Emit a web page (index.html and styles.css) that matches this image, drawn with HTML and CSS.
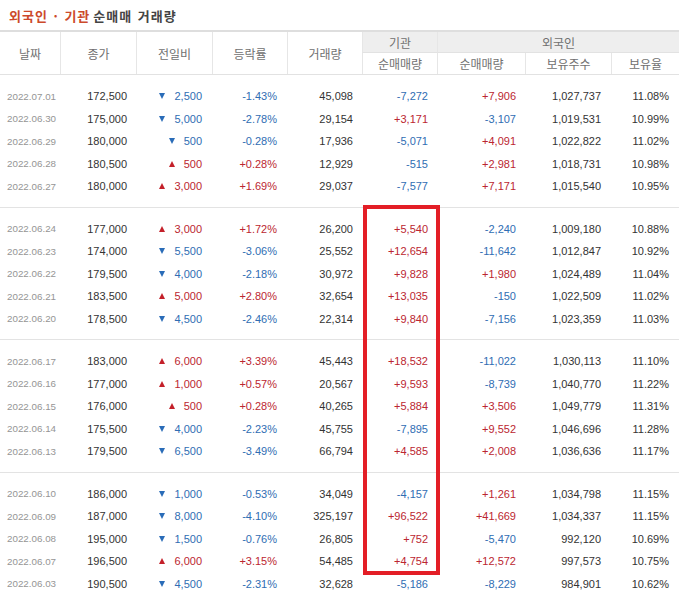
FILE: index.html
```html
<!DOCTYPE html>
<html lang="ko">
<head>
<meta charset="utf-8">
<title>외국인 · 기관 순매매 거래량</title>
<link rel="stylesheet" href="styles.css">
</head>
<body>
<div class="page">
  <h2 class="title"><span class="accent">외국인 · 기관</span> 순매매 거래량</h2>
  <div class="head">
    <div class="hc span2">날짜</div>
    <div class="hc span2">종가</div>
    <div class="hc span2">전일비</div>
    <div class="hc span2">등락률</div>
    <div class="hc span2">거래량</div>
    <div class="hc top">기관</div>
    <div class="hc top wide">외국인</div>
    <div class="hc">순매매량</div>
    <div class="hc">순매매량</div>
    <div class="hc">보유주수</div>
    <div class="hc">보유율</div>
  </div>

  <div class="group">
    <div class="row"><span class="d">2022.07.01</span><span>172,500</span><span class="dn"><i class="tri down"></i>2,500</span><span class="dn">-1.43%</span><span>45,098</span><span class="dn">-7,272</span><span class="up">+7,906</span><span>1,027,737</span><span>11.08%</span></div>
    <div class="row"><span class="d">2022.06.30</span><span>175,000</span><span class="dn"><i class="tri down"></i>5,000</span><span class="dn">-2.78%</span><span>29,154</span><span class="up">+3,171</span><span class="dn">-3,107</span><span>1,019,531</span><span>10.99%</span></div>
    <div class="row"><span class="d">2022.06.29</span><span>180,000</span><span class="dn"><i class="tri down"></i>500</span><span class="dn">-0.28%</span><span>17,936</span><span class="dn">-5,071</span><span class="up">+4,091</span><span>1,022,822</span><span>11.02%</span></div>
    <div class="row"><span class="d">2022.06.28</span><span>180,500</span><span class="up"><i class="tri upt"></i>500</span><span class="up">+0.28%</span><span>12,929</span><span class="dn">-515</span><span class="up">+2,981</span><span>1,018,731</span><span>10.98%</span></div>
    <div class="row"><span class="d">2022.06.27</span><span>180,000</span><span class="up"><i class="tri upt"></i>3,000</span><span class="up">+1.69%</span><span>29,037</span><span class="dn">-7,577</span><span class="up">+7,171</span><span>1,015,540</span><span>10.95%</span></div>
  </div>

  <div class="group">
    <div class="row"><span class="d">2022.06.24</span><span>177,000</span><span class="up"><i class="tri upt"></i>3,000</span><span class="up">+1.72%</span><span>26,200</span><span class="up">+5,540</span><span class="dn">-2,240</span><span>1,009,180</span><span>10.88%</span></div>
    <div class="row"><span class="d">2022.06.23</span><span>174,000</span><span class="dn"><i class="tri down"></i>5,500</span><span class="dn">-3.06%</span><span>25,552</span><span class="up">+12,654</span><span class="dn">-11,642</span><span>1,012,847</span><span>10.92%</span></div>
    <div class="row"><span class="d">2022.06.22</span><span>179,500</span><span class="dn"><i class="tri down"></i>4,000</span><span class="dn">-2.18%</span><span>30,972</span><span class="up">+9,828</span><span class="up">+1,980</span><span>1,024,489</span><span>11.04%</span></div>
    <div class="row"><span class="d">2022.06.21</span><span>183,500</span><span class="up"><i class="tri upt"></i>5,000</span><span class="up">+2.80%</span><span>32,654</span><span class="up">+13,035</span><span class="dn">-150</span><span>1,022,509</span><span>11.02%</span></div>
    <div class="row"><span class="d">2022.06.20</span><span>178,500</span><span class="dn"><i class="tri down"></i>4,500</span><span class="dn">-2.46%</span><span>22,314</span><span class="up">+9,840</span><span class="dn">-7,156</span><span>1,023,359</span><span>11.03%</span></div>
  </div>

  <div class="group">
    <div class="row"><span class="d">2022.06.17</span><span>183,000</span><span class="up"><i class="tri upt"></i>6,000</span><span class="up">+3.39%</span><span>45,443</span><span class="up">+18,532</span><span class="dn">-11,022</span><span>1,030,113</span><span>11.10%</span></div>
    <div class="row"><span class="d">2022.06.16</span><span>177,000</span><span class="up"><i class="tri upt"></i>1,000</span><span class="up">+0.57%</span><span>20,567</span><span class="up">+9,593</span><span class="dn">-8,739</span><span>1,040,770</span><span>11.22%</span></div>
    <div class="row"><span class="d">2022.06.15</span><span>176,000</span><span class="up"><i class="tri upt"></i>500</span><span class="up">+0.28%</span><span>40,265</span><span class="up">+5,884</span><span class="up">+3,506</span><span>1,049,779</span><span>11.31%</span></div>
    <div class="row"><span class="d">2022.06.14</span><span>175,500</span><span class="dn"><i class="tri down"></i>4,000</span><span class="dn">-2.23%</span><span>45,755</span><span class="dn">-7,895</span><span class="up">+9,552</span><span>1,046,696</span><span>11.28%</span></div>
    <div class="row"><span class="d">2022.06.13</span><span>179,500</span><span class="dn"><i class="tri down"></i>6,500</span><span class="dn">-3.49%</span><span>66,794</span><span class="up">+4,585</span><span class="up">+2,008</span><span>1,036,636</span><span>11.17%</span></div>
  </div>

  <div class="group last">
    <div class="row"><span class="d">2022.06.10</span><span>186,000</span><span class="dn"><i class="tri down"></i>1,000</span><span class="dn">-0.53%</span><span>34,049</span><span class="dn">-4,157</span><span class="up">+1,261</span><span>1,034,798</span><span>11.15%</span></div>
    <div class="row"><span class="d">2022.06.09</span><span>187,000</span><span class="dn"><i class="tri down"></i>8,000</span><span class="dn">-4.10%</span><span>325,197</span><span class="up">+96,522</span><span class="up">+41,669</span><span>1,034,337</span><span>11.15%</span></div>
    <div class="row"><span class="d">2022.06.08</span><span>195,000</span><span class="dn"><i class="tri down"></i>1,500</span><span class="dn">-0.76%</span><span>26,805</span><span class="up">+752</span><span class="dn">-5,470</span><span>992,120</span><span>10.69%</span></div>
    <div class="row"><span class="d">2022.06.07</span><span>196,500</span><span class="up"><i class="tri upt"></i>6,000</span><span class="up">+3.15%</span><span>54,485</span><span class="up">+4,754</span><span class="up">+12,572</span><span>997,573</span><span>10.75%</span></div>
    <div class="row"><span class="d">2022.06.03</span><span>190,500</span><span class="dn"><i class="tri down"></i>4,500</span><span class="dn">-2.31%</span><span>32,628</span><span class="dn">-5,186</span><span class="dn">-8,229</span><span>984,901</span><span>10.62%</span></div>
  </div>

  <div class="highlight"></div>
</div>
</body>
</html>
```

FILE: styles.css
```css
html, body {
  margin: 0;
  padding: 0;
  background: #ffffff;
}

.page {
  position: relative;
  width: 679px;
  font-family: "Liberation Sans", "Noto Sans CJK KR", sans-serif;
  color: #333333;
}

.title {
  margin: 0;
  height: 30px;
  padding-left: 9px;
  box-sizing: border-box;
  display: flex;
  align-items: center;
  font-family: "Noto Sans CJK KR", sans-serif;
  font-size: 13px;
  font-weight: 700;
  color: #444444;
  letter-spacing: 1px;
  word-spacing: 1px;
}

.title .accent {
  color: #cc4a2b;
  margin-right: 3px;
}

.head {
  display: grid;
  grid-template-columns: 60px 76px 76px 75px 75px 75px 88px 86px 68px;
  grid-template-rows: 21px 21px;
  border-top: 2px solid #dedede;
  border-bottom: 1px solid #e2e2e2;
  font-family: "Noto Sans CJK KR", sans-serif;
  font-size: 12px;
  color: #707070;
}

.hc {
  display: flex;
  align-items: center;
  justify-content: center;
  border-left: 1px solid #e6e6e6;
  box-sizing: border-box;
  background: #ffffff;
}

.hc:first-child {
  border-left: none;
}

.hc.span2 {
  grid-row: span 2;
}

.hc.top {
  background: #eeeeee;
  border-bottom: 1px solid #e2e2e2;
}

.hc.wide {
  grid-column: span 3;
}

.group {
  padding: 10px 0 9px;
  border-bottom: 1px solid #e3e3e3;
}

.group.last {
  border-bottom: none;
}

.row {
  display: grid;
  grid-template-columns: 60px 76px 76px 75px 75px 75px 88px 86px 68px;
  height: 22.5px;
  align-items: center;
  font-size: 11px;
}

.row span {
  text-align: right;
  padding-right: 9px;
  white-space: nowrap;
}

.row span:nth-child(3),
.row span:nth-child(4),
.row span:nth-child(8),
.row span:nth-child(9) {
  padding-right: 10px;
}

.row span.d {
  text-align: left;
  padding-left: 7px;
  padding-right: 0;
  font-size: 9.8px;
  color: #959595;
}

.up {
  color: #bb2630;
}

.dn {
  color: #2f6db3;
}

.tri {
  display: inline-block;
  width: 0;
  height: 0;
  border-left: 3.5px solid transparent;
  border-right: 3.5px solid transparent;
  margin-right: 9px;
  vertical-align: 1px;
}

.tri.down {
  border-top: 6px solid #2a6cb8;
}

.tri.upt {
  border-bottom: 6px solid #c4202a;
}

.highlight {
  position: absolute;
  left: 363px;
  top: 205px;
  width: 77px;
  height: 370px;
  box-sizing: border-box;
  border: 4px solid #e31e26;
}
```
